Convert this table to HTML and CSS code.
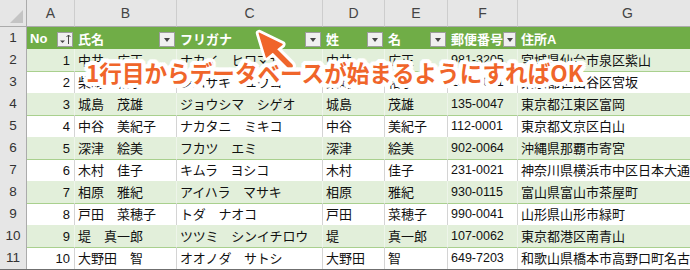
FILE: index.html
```html
<!DOCTYPE html>
<html lang="ja">
<head>
<meta charset="utf-8">
<link rel="stylesheet" href="styles.css">
</head>
<body>
<div class="sheet">
  <div class="row colhead">
    <div class="c corner"><span class="tri"></span></div>
    <div class="c">A</div><div class="c">B</div><div class="c">C</div><div class="c">D</div><div class="c">E</div><div class="c">F</div><div class="c">G</div>
  </div>
  <div class="row hdr">
    <div class="rh">1</div>
    <div class="h"><span>No</span><span class="fb"><svg width="14" height="13" viewBox="0 0 14 13"><path d="M2 7.5h5l-2.5 2.5z" fill="#444"/><path d="M10.5 2v9M8.5 4l2-2 2 2" stroke="#444" stroke-width="1" fill="none"/></svg></span></div>
    <div class="h"><span>氏名</span><span class="fb"><i></i></span></div>
    <div class="h"><span>フリガナ</span><span class="fb"><i></i></span></div>
    <div class="h"><span>姓</span><span class="fb"><i></i></span></div>
    <div class="h"><span>名</span><span class="fb"><i></i></span></div>
    <div class="h"><span>郵便番号</span><span class="fb"><i></i></span></div>
    <div class="h"><span>住所A</span></div>
  </div>
  <div class="row band"><div class="rh">2</div><div class="d num">1</div><div class="d">中井　広正</div><div class="d kana">ナカイ　ヒロマサ</div><div class="d">中井</div><div class="d">広正</div><div class="d zip">981-3205</div><div class="d">宮城県仙台市泉区紫山</div></div>
  <div class="row"><div class="rh">3</div><div class="d num">2</div><div class="d">柴崎　裕子</div><div class="d kana">シバサキ　ユウコ</div><div class="d">柴崎</div><div class="d">裕子</div><div class="d zip">156-0051</div><div class="d">東京都世田谷区宮坂</div></div>
  <div class="row band"><div class="rh">4</div><div class="d num">3</div><div class="d">城島　茂雄</div><div class="d kana">ジョウシマ　シゲオ</div><div class="d">城島</div><div class="d">茂雄</div><div class="d zip">135-0047</div><div class="d">東京都江東区富岡</div></div>
  <div class="row"><div class="rh">5</div><div class="d num">4</div><div class="d">中谷　美紀子</div><div class="d kana">ナカタニ　ミキコ</div><div class="d">中谷</div><div class="d">美紀子</div><div class="d zip">112-0001</div><div class="d">東京都文京区白山</div></div>
  <div class="row band"><div class="rh">6</div><div class="d num">5</div><div class="d">深津　絵美</div><div class="d kana">フカツ　エミ</div><div class="d">深津</div><div class="d">絵美</div><div class="d zip">902-0064</div><div class="d">沖縄県那覇市寄宮</div></div>
  <div class="row"><div class="rh">7</div><div class="d num">6</div><div class="d">木村　佳子</div><div class="d kana">キムラ　ヨシコ</div><div class="d">木村</div><div class="d">佳子</div><div class="d zip">231-0021</div><div class="d">神奈川県横浜市中区日本大通</div></div>
  <div class="row band"><div class="rh">8</div><div class="d num">7</div><div class="d">相原　雅紀</div><div class="d kana">アイハラ　マサキ</div><div class="d">相原</div><div class="d">雅紀</div><div class="d zip">930-0115</div><div class="d">富山県富山市茶屋町</div></div>
  <div class="row"><div class="rh">9</div><div class="d num">8</div><div class="d">戸田　菜穂子</div><div class="d kana">トダ　ナオコ</div><div class="d">戸田</div><div class="d">菜穂子</div><div class="d zip">990-0041</div><div class="d">山形県山形市緑町</div></div>
  <div class="row band"><div class="rh">10</div><div class="d num">9</div><div class="d">堤　真一郎</div><div class="d kana">ツツミ　シンイチロウ</div><div class="d">堤</div><div class="d">真一郎</div><div class="d zip">107-0062</div><div class="d">東京都港区南青山</div></div>
  <div class="row"><div class="rh">11</div><div class="d num">10</div><div class="d">大野田　智</div><div class="d kana">オオノダ　サトシ</div><div class="d">大野田</div><div class="d">智</div><div class="d zip">649-7203</div><div class="d">和歌山県橋本市高野口町名古曽</div></div>

  <svg class="arrow" width="50" height="48" viewBox="0 0 50 48">
    <g stroke="#fff" stroke-linejoin="round" stroke-linecap="round">
      <polygon points="9.3,7.3 32,18.5 16.5,31" fill="#fff" stroke-width="7"/>
      <line x1="22" y1="22" x2="40" y2="40" stroke-width="12"/>
    </g>
    <polygon points="9.3,7.3 32,18.5 16.5,31" fill="#f0652a" stroke="#f0652a" stroke-width="1.5" stroke-linejoin="round"/>
    <line x1="21" y1="21" x2="40" y2="40" stroke="#f0652a" stroke-width="5.5" stroke-linecap="round"/>
  </svg>
  <div class="callout">1行目からデータベースが始まるようにすればOK</div>
</div>
</body>
</html>
```

FILE: styles.css
```css
* { box-sizing: border-box; }
body {
  margin: 0;
  width: 690px;
  height: 270px;
  overflow: hidden;
  background: #fff;
  font-family: "Liberation Sans", "Noto Sans CJK JP", sans-serif;
}
.sheet {
  position: relative;
  width: 690px;
  height: 270px;
  overflow: hidden;
  border-bottom: 1px solid #6f6f6f;
}
.row {
  display: grid;
  grid-template-columns: 27px 48px 102px 146px 62px 63px 70px 220px;
  height: 22px;
}
.colhead { height: 27px; }
.colhead .c {
  background: #e6e6e6;
  border-right: 1px solid #cdcdcd;
  border-bottom: 1px solid #ababab;
  text-align: center;
  line-height: 26px;
  font-size: 14px;
  color: #444;
}
.colhead .corner {
  position: relative;
  border-right: 1px solid #ababab;
}
.corner .tri {
  position: absolute;
  right: 3px;
  bottom: 3px;
  width: 0;
  height: 0;
  border-left: 13px solid transparent;
  border-bottom: 13px solid #c4c4c4;
}
.rh {
  background: #e6e6e6;
  border-right: 1px solid #ababab;
  border-bottom: 1px solid #cbcbcb;
  text-align: center;
  font-size: 13.5px;
  line-height: 22px;
  color: #333;
}
.hdr .h {
  background: #70ad47;
  color: #fff;
  font-weight: bold;
  font-size: 13px;
  padding: 0 2px 0 3px;
  display: flex;
  align-items: center;
  justify-content: space-between;
  white-space: nowrap;
}
.fb {
  width: 16px;
  height: 15px;
  background: #f0f0f0;
  border: 1px solid #9d9d9d;
  display: flex;
  align-items: center;
  justify-content: center;
  margin-top: 1px;
}
.fb i {
  display: block;
  width: 0;
  height: 0;
  margin-top: 2px;
  border-left: 3.5px solid transparent;
  border-right: 3.5px solid transparent;
  border-top: 4px solid #444;
}
.d {
  border-right: 1px solid #d4d4d4;
  border-bottom: 1px solid #a9d08e;
  font-size: 13px;
  line-height: 21px;
  padding: 1px 3px 0 3px;
  white-space: nowrap;
  color: #111;
}
.band .d {
  background: #e2efda;
  border-right-color: #eef5ea;
}
.num { text-align: right; padding-right: 4px; }
.zip { font-size: 12.5px; }
.kana { letter-spacing: -0.2px; }
.callout {
  position: absolute;
  left: 86px;
  top: 62px;
  font-family: "Noto Sans CJK JP", sans-serif;
  font-weight: 700;
  font-size: 22.6px;
  line-height: 22px;
  color: #f0652a;
  white-space: nowrap;
  text-shadow:
    4px 0 0 #fff, -4px 0 0 #fff, 0 4px 0 #fff, 0 -4px 0 #fff,
    3px 3px 0 #fff, -3px 3px 0 #fff, 3px -3px 0 #fff, -3px -3px 0 #fff,
    4px 2px 0 #fff, -4px 2px 0 #fff, 4px -2px 0 #fff, -4px -2px 0 #fff,
    2px 4px 0 #fff, -2px 4px 0 #fff, 2px -4px 0 #fff, -2px -4px 0 #fff,
    0 0 5px rgba(255,255,255,0.9);
}
.arrow {
  position: absolute;
  left: 250px;
  top: 26px;
}
```
